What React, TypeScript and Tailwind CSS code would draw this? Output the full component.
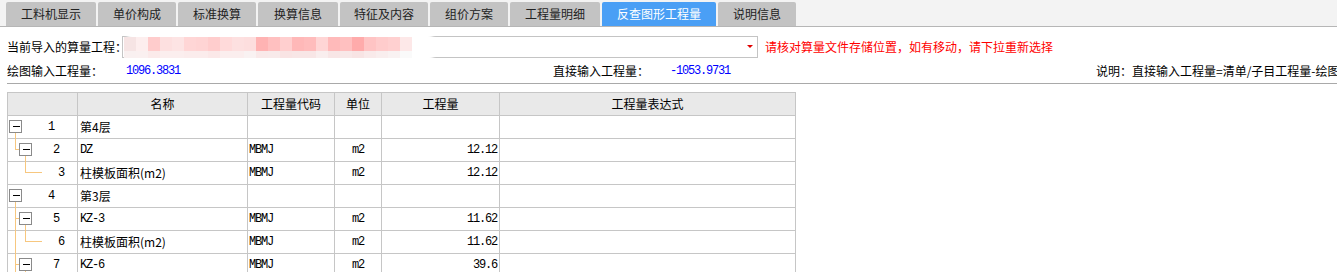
import React from "react";

const tabs = [
  { label: "工料机显示", w: "w-[90px]" },
  { label: "单价构成", w: "w-[78px]" },
  { label: "标准换算", w: "w-[78px]" },
  { label: "换算信息", w: "w-[80px]" },
  { label: "特征及内容", w: "w-[88px]" },
  { label: "组价方案", w: "w-[78px]" },
  { label: "工程量明细", w: "w-[90px]" },
  { label: "反查图形工程量", w: "w-[114px]", active: true },
  { label: "说明信息", w: "w-[78px]" },
];

const cjk = "font-['Noto_Sans_CJK_SC',sans-serif]";
const mono =
  "font-['Liberation_Mono','Noto_Sans_CJK_SC',monospace] text-[12px] tracking-[-1.2px]";

const topColors = [
  "#f6e4e4", "#fdeeee", "#ffcccc", "#fde0e0", "#fde4e4", "#ffd6d6", "#ffd4d4", "#ffcdcd",
  "#ffdada", "#fde0e0", "#fddede", "#ffb3b3", "#ffc0c0", "#ffcfcf", "#ffb8b8", "#ffbcbc",
  "#ffd5d5", "#ffbaba", "#ffc0c0", "#ffabab", "#ffc4c4", "#ffcccc", "#ffd0d0", "#fde8e8",
];
const bottomColors = [
  "#f9f0f0", "#faf0f0", "#fbeaea", "#fbeeee", "#fbeeee", "#fbecec", "#fbecec", "#fbe8e8",
  "#fbeeee", "#fbeeee", "#f9f2f2", "#f9e9e9", "#f8eaea", "#f9e4e4", "#f8e6e6", "#f8e6e6",
  "#f9eeee", "#f8e6e6", "#f8e8e8", "#f8e4e4", "#f9eaea", "#f9eeee", "#f9f2f2", "#fafafa",
];

type L = [number, number, number, number];
type Row = {
  n: number;
  level: 0 | 1 | 2;
  name: string;
  cjkName?: boolean;
  code?: string;
  unit?: string;
  qty?: string;
  lines: L[];
  boxes: number[];
};

const full7: L = [7.5, -1, 7.5, 23];
const rows: Row[] = [
  { n: 1, level: 0, name: "第4层", cjkName: true, lines: [[7.5, 16.5, 7.5, 23]], boxes: [1.5] },
  {
    n: 2, level: 1, name: "DZ", code: "MBMJ", unit: "m2", qty: "12.12",
    lines: [[7.5, -1, 7.5, 10.5], [7.5, 10.5, 11.5, 10.5], [17.5, 16.5, 17.5, 23]], boxes: [11.5],
  },
  {
    n: 3, level: 2, name: "柱模板面积(m2)", cjkName: true, code: "MBMJ", unit: "m2", qty: "12.12",
    lines: [[17.5, -1, 17.5, 10.5], [17.5, 10.5, 34, 10.5]], boxes: [],
  },
  { n: 4, level: 0, name: "第3层", cjkName: true, lines: [[7.5, 16.5, 7.5, 23]], boxes: [1.5] },
  {
    n: 5, level: 1, name: "KZ-3", code: "MBMJ", unit: "m2", qty: "11.62",
    lines: [full7, [7.5, 10.5, 11.5, 10.5], [17.5, 16.5, 17.5, 23]], boxes: [11.5],
  },
  {
    n: 6, level: 2, name: "柱模板面积(m2)", cjkName: true, code: "MBMJ", unit: "m2", qty: "11.62",
    lines: [full7, [17.5, -1, 17.5, 10.5], [17.5, 10.5, 34, 10.5]], boxes: [],
  },
  {
    n: 7, level: 1, name: "KZ-6", code: "MBMJ", unit: "m2", qty: "39.6",
    lines: [full7, [7.5, 10.5, 11.5, 10.5], [17.5, 16.5, 17.5, 23]], boxes: [11.5],
  },
];

const numPad = ["pl-[40px]", "pl-[45px]", "pl-[50px]"];

function TreeCell({ row }: { row: Row }) {
  return (
    <div className="relative bg-white flex items-center">
      <svg
        width={69}
        height={22}
        className="absolute left-0 top-0 overflow-visible"
        shapeRendering="crispEdges"
      >
        {row.lines.map((l, i) => (
          <line key={i} x1={l[0]} y1={l[1]} x2={l[2]} y2={l[3]} stroke="#f7c77f" strokeWidth={1} />
        ))}
        {row.boxes.map((x, i) => (
          <g key={i}>
            <rect x={x} y={4.5} width={12} height={12} fill="#fff" stroke="#8a8a8a" strokeWidth={1} />
            <line x1={x + 3} y1={10.5} x2={x + 10} y2={10.5} stroke="#000" strokeWidth={1} />
          </g>
        ))}
      </svg>
      <span className={`relative ${mono} text-black ${numPad[row.level]}`}>{row.n}</span>
    </div>
  );
}

export default function App() {
  return (
    <div className={`w-[1337px] h-[272px] overflow-hidden bg-white ${cjk}`}>
      {/* tab bar */}
      <div className="h-[26px] bg-[#f3f3f3] flex items-end gap-[2px] pl-[6px] border-b border-[#b6b6b6] box-content">
        {tabs.map((t) => (
          <div
            key={t.label}
            className={`${t.w} shrink-0 h-[24px] rounded-t-[2px] flex items-center justify-center text-[12px] leading-none ${
              t.active ? "bg-[#4a9ff5] text-white" : "bg-[#c3c3c3] text-[#222]"
            }`}
          >
            {t.label}
          </div>
        ))}
      </div>

      <div className="pl-[7px]">
        {/* import row */}
        <div className="mt-[9px] h-[22px] flex items-center">
          <div className="w-[115px] shrink-0 text-[12px] leading-none text-black whitespace-nowrap">
            当前导入的算量工程：
          </div>
          <div className="relative shrink-0 w-[636px] h-[22px] border border-[#c4c4c4] bg-white">
            <div className="absolute left-[2px] top-[-5px] w-[310px] h-[31px] bg-white rounded-[12px] blur-[1.5px]" />
            <div className="absolute left-[1px] top-0 flex flex-col blur-[0.4px]">
              <div className="flex h-[14px]">
                {topColors.map((c, i) => (
                  <div key={i} className="w-[12px] h-full" style={{ backgroundColor: c }} />
                ))}
              </div>
              <div className="flex h-[7px]">
                {bottomColors.map((c, i) => (
                  <div key={i} className="w-[12px] h-full" style={{ backgroundColor: c }} />
                ))}
              </div>
            </div>
            <div className="absolute right-[4px] top-[8px] w-0 h-0 border-l-[3px] border-r-[3px] border-t-[3px] border-l-transparent border-r-transparent border-t-[#e00000]" />
          </div>
          <div className="ml-[7px] shrink-0 text-[12px] leading-none text-[#ff0000] whitespace-nowrap">
            请核对算量文件存储位置，如有移动，请下拉重新选择
          </div>
        </div>

        {/* quantities row */}
        <div className="mt-[1px] h-[24px] flex items-center whitespace-nowrap border-b border-[#a9a9a9] box-content overflow-hidden">
          <div className="w-[119px] shrink-0 text-[12px] leading-none text-black">绘图输入工程量：</div>
          <div className={`w-[427px] shrink-0 ${mono} text-[#0000ff]`}>1096.3831</div>
          <div className="w-[117px] shrink-0 text-[12px] leading-none text-black">直接输入工程量：</div>
          <div className={`w-[426px] shrink-0 ${mono} text-[#0000ff]`}>-1053.9731</div>
          <div className="shrink-0 text-[12px] leading-none text-black">
            说明：直接输入工程量=清单/子目工程量-绘图输入工程量
          </div>
        </div>

        {/* table */}
        <div className="mt-[8px] w-[789px] grid grid-cols-[69px_169px_86px_46px_117px_295px] auto-rows-[22px] gap-px p-px bg-[#c6c6c6] text-[12px] leading-none text-black">
          <div className="bg-[#e9e9e9]" />
          <div className="bg-[#e9e9e9] flex items-center justify-center">名称</div>
          <div className="bg-[#e9e9e9] flex items-center justify-center">工程量代码</div>
          <div className="bg-[#e9e9e9] flex items-center justify-center">单位</div>
          <div className="bg-[#e9e9e9] flex items-center justify-center">工程量</div>
          <div className="bg-[#e9e9e9] flex items-center justify-center">工程量表达式</div>

          {rows.map((r) => (
            <React.Fragment key={r.n}>
              <TreeCell row={r} />
              <div className="bg-white flex items-center pl-[2px] whitespace-nowrap">
                <span className={r.cjkName ? "text-[12px]" : mono}>{r.name}</span>
              </div>
              <div className={`bg-white flex items-center pl-[1px] ${mono}`}>{r.code ?? ""}</div>
              <div className={`bg-white flex items-center justify-center ${mono}`}>{r.unit ?? ""}</div>
              <div className={`bg-white flex items-center justify-end pr-[2px] ${mono}`}>{r.qty ?? ""}</div>
              <div className="bg-white" />
            </React.Fragment>
          ))}
        </div>
      </div>
    </div>
  );
}
